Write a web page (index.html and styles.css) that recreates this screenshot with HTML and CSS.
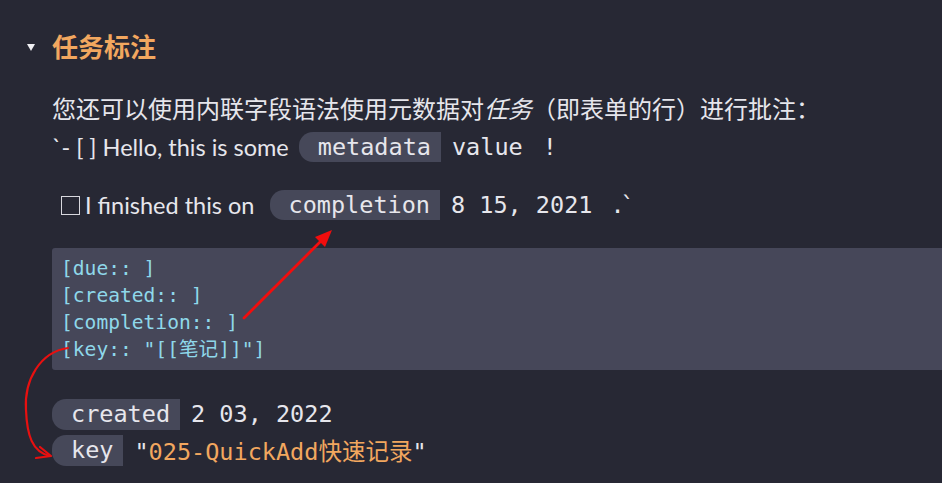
FILE: index.html
```html
<!DOCTYPE html>
<html lang="zh">
<head>
<meta charset="utf-8">
<link rel="stylesheet" href="styles.css">
</head>
<body>
<div class="page">
  <h2 class="heading"><span class="caret"></span>任务标注</h2>
  <div class="para">
    <div class="line cjk">您还可以使用内联字段语法使用元数据对<em>任务</em>（即表单的行）进行批注：</div>
    <div class="line latin">`- [ ] Hello, this is some <span class="field"><span class="key">metadata</span><span class="val">value <span class="bang">!</span></span></span></div>
  </div>
  <div class="task latin"><span class="box"></span>I finished this on <span class="field wide"><span class="key">completion</span><span class="val">8 15, 2021</span></span><span class="tail">.`</span></div>
  <pre class="code">[due:: ]
[created:: ]
[completion:: ]
[key:: "[[笔记]]"]</pre>
  <div class="props">
    <div class="prop"><span class="key">created</span><span class="val">2 03, 2022</span></div>
    <div class="prop"><span class="key">key</span><span class="val">"<span class="str">025-QuickAdd快速记录</span>"</span></div>
  </div>
  <svg class="arrows" width="942" height="483" viewBox="0 0 942 483">
    <path d="M244 318 L326 236" stroke="#f20d0d" stroke-width="2.8" fill="none" stroke-linecap="round"/>
    <path d="M332 230 L315 237 L325 247 Z" fill="#f20d0d"/>
    <path d="M68 348 C40 352 24 380 26 410 C27 435 32 452 50 456" stroke="#e81010" stroke-width="2.2" fill="none" stroke-linecap="round"/>
    <path d="M40 447 L51 456 L36 458" stroke="#e81010" stroke-width="2.2" fill="none" stroke-linecap="round" stroke-linejoin="round"/>
  </svg>
</div>
</body>
</html>
```
FILE: styles.css
```css
html, body {
  margin: 0;
  padding: 0;
  background: #272834;
}
.page {
  position: relative;
  width: 942px;
  height: 483px;
  overflow: hidden;
  padding-left: 52px;
  box-sizing: border-box;
  color: #e6e6ec;
  font-family: Lato, "Noto Sans CJK SC", sans-serif;
}
.heading {
  position: relative;
  margin: 0;
  padding-top: 28px;
  height: 38px;
  line-height: 36px;
  font-family: "Noto Sans CJK SC", sans-serif;
  font-size: 26px;
  font-weight: 600;
  color: #f2a75f;
}
.caret {
  position: absolute;
  left: -25px;
  top: 44px;
  width: 0;
  height: 0;
  border-left: 4.5px solid transparent;
  border-right: 4.5px solid transparent;
  border-top: 7px solid #f0f0f4;
}
.para {
  margin-top: 22px;
}
.line {
  height: 39px;
  display: flex;
  align-items: center;
  white-space: pre;
}
.cjk {
  font-family: "Noto Sans CJK SC", sans-serif;
  font-size: 24px;
}
.cjk em {
  font-style: italic;
}
.latin {
  font-family: Lato, "Noto Sans CJK SC", sans-serif;
  font-size: 23.5px;
}
.field {
  display: inline-flex;
  align-items: center;
  margin-left: 4px;
}
.field.wide {
  margin-left: 9px;
}
.key {
  font-family: "DejaVu Sans Mono", monospace;
  font-size: 23.5px;
  background: #464859;
  border-radius: 14px 0 0 14px;
  padding: 0 10px 0 19px;
  height: 30px;
  line-height: 30px;
}
.val {
  font-family: "DejaVu Sans Mono", monospace;
  font-size: 23.5px;
  padding-left: 11px;
  white-space: pre;
}
.bang {
  margin-left: 6px;
}
.task {
  margin-top: 20px;
  height: 38px;
  display: flex;
  align-items: center;
  white-space: pre;
}
.box {
  width: 17px;
  height: 17px;
  border: 1.5px solid #d8d8de;
  margin-left: 9px;
  margin-right: 5px;
}
.tail {
  font-family: "DejaVu Sans Mono", monospace;
  font-size: 23.5px;
  margin-left: 18px;
  letter-spacing: -4px;
}
.code {
  margin: 24px 0 0 0;
  background: #464759;
  color: #8fd8ea;
  font-family: "DejaVu Sans Mono", "Noto Sans CJK SC", monospace;
  font-size: 19.6px;
  line-height: 27px;
  padding: 7px 9px;
  height: 108px;
  border-radius: 3px 0 0 3px;
}
.props {
  margin-top: 26px;
}
.prop {
  display: flex;
  align-items: center;
  height: 36px;
}
.prop .key {
  height: 31px;
  line-height: 31px;
}
.str {
  color: #f2a75f;
}
.val .str {
  font-family: "DejaVu Sans Mono", "Noto Sans CJK SC", monospace;
}
.arrows {
  position: absolute;
  left: 0;
  top: 0;
  pointer-events: none;
}
```
